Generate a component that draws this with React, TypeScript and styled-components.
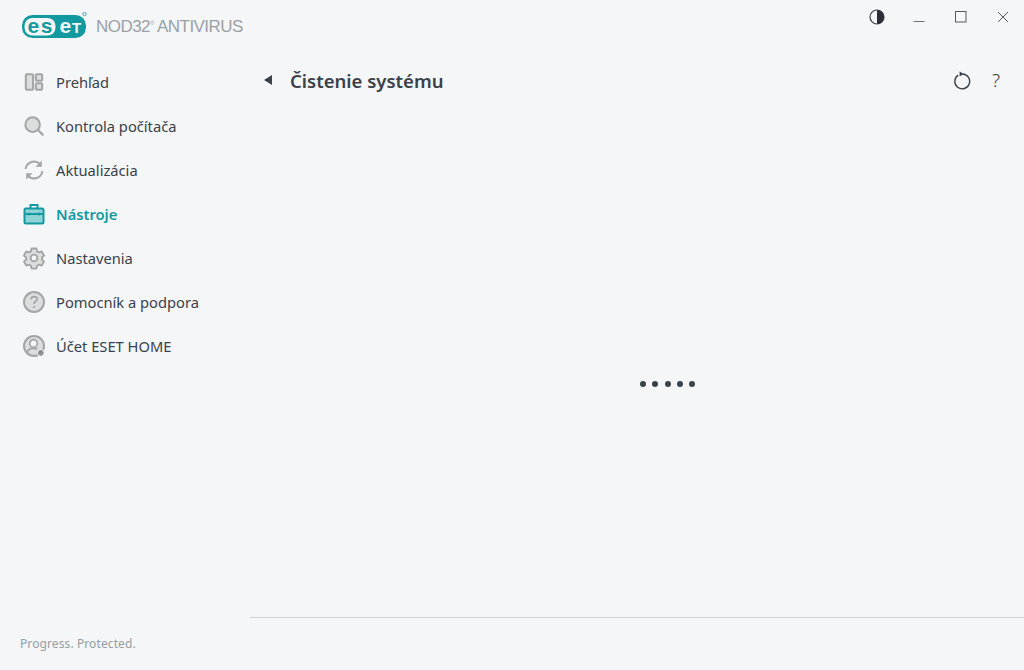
import React from "react";
import styled, { createGlobalStyle } from "styled-components";

const GlobalStyle = createGlobalStyle`
  html, body {
    margin: 0;
    padding: 0;
    background: #f4f6f8;
  }
  * {
    box-sizing: border-box;
  }
`;

const GRAY = "#a3a5a6";
const GRAY_FILL = "#dcdddd";
const TEAL = "#129aa0";
const TEAL_FILL = "#8ed3d6";
const DARK = "#3b4149";
const BG = "#f4f6f8";

const OverviewIcon = () => (
  <svg width="20" height="20" viewBox="0 0 22 22" fill={GRAY_FILL} stroke={GRAY} strokeWidth="2.2">
    <rect x="2" y="2.5" width="8" height="17" rx="1" />
    <rect x="13" y="2.5" width="7" height="7" rx="1" />
    <rect x="13" y="12.5" width="7" height="7" rx="1" />
  </svg>
);

const SearchIcon = () => (
  <svg width="20" height="20" viewBox="0 0 22 22" fill="none" stroke={GRAY} strokeWidth="2.2">
    <circle cx="9.5" cy="9.5" r="8" fill={GRAY_FILL} />
    <path d="M15.5 15.5L20.5 20.5" strokeLinecap="round" strokeWidth="2.4" />
  </svg>
);

const UpdateIcon = () => (
  <svg width="22" height="22" viewBox="0 0 22 22" fill="none" stroke={GRAY} strokeWidth="2">
    <path d="M2.6 10A8.5 8.5 0 0 1 17.2 5.2" />
    <path d="M19.4 12A8.5 8.5 0 0 1 4.8 16.8" />
    <path d="M18.8 1.6V7.8H12.6Z" fill={GRAY} stroke="none" />
    <path d="M3.2 20.4V14.2H9.4Z" fill={GRAY} stroke="none" />
  </svg>
);

const ToolsIcon = () => (
  <svg width="22" height="22" viewBox="0 0 22 22" fill="none" stroke={TEAL} strokeWidth="2">
    <rect x="1.5" y="5.5" width="19" height="15" rx="1.5" fill={TEAL_FILL} />
    <path d="M7.5 5.5V2H14.5V5.5" />
    <path d="M2 11H20" />
    <path d="M6 9.5V12.5M16 9.5V12.5" strokeWidth="1.5" />
  </svg>
);

const SettingsIcon = () => (
  <svg width="24" height="24" viewBox="0 0 24 24" fill="none" stroke={GRAY} strokeWidth="1.9" strokeLinejoin="round">
    <path
      d="M9.6 2.5h4.8l.7 2.9 1.7 1 2.9-.9 2.3 4-2.1 2 0 2.1 2.1 2-2.3 4-2.9-.9-1.7 1-.7 2.9H9.6l-.7-2.9-1.7-1-2.9.9-2.3-4 2.1-2 0-2.1-2.1-2 2.3-4 2.9.9 1.7-1z"
      fill={GRAY_FILL}
    />
    <circle cx="12" cy="12" r="3.4" fill={BG} />
  </svg>
);

const HelpIcon = () => (
  <svg width="24" height="24" viewBox="0 0 24 24" fill="none" stroke={GRAY} strokeWidth="2">
    <circle cx="12" cy="12" r="10" fill={GRAY_FILL} />
    <path d="M8.9 9.4C9 7.6 10.3 6.6 12 6.6C13.8 6.6 15.1 7.7 15.1 9.2C15.1 11.4 12 11.5 12 14" strokeWidth="1.7" />
    <circle cx="12" cy="17" r="1.1" fill={GRAY} stroke="none" />
  </svg>
);

const AccountIcon = () => (
  <svg width="24" height="24" viewBox="0 0 24 24" fill="none" stroke={GRAY} strokeWidth="2">
    <circle cx="12" cy="12" r="10" fill={GRAY_FILL} />
    <circle cx="11.5" cy="9.5" r="3.8" fill={BG} strokeWidth="1.7" />
    <path d="M5 19C5.8 15.8 8 14.4 11.5 14.4C13 14.4 14.2 14.7 15.2 15.2" strokeWidth="1.7" />
    <circle cx="18.8" cy="18.8" r="3.4" fill="#8e9091" stroke={BG} strokeWidth="1" />
  </svg>
);

const navItems = [
  { label: "Prehľad", icon: <OverviewIcon /> },
  { label: "Kontrola počítača", icon: <SearchIcon /> },
  { label: "Aktualizácia", icon: <UpdateIcon /> },
  { label: "Nástroje", icon: <ToolsIcon />, active: true },
  { label: "Nastavenia", icon: <SettingsIcon /> },
  { label: "Pomocník a podpora", icon: <HelpIcon /> },
  { label: "Účet ESET HOME", icon: <AccountIcon /> },
];

const LOGO_FONT = "'Liberation Sans', sans-serif";

const App = () => {
  return (
    <Page>
      <GlobalStyle />
      <Sidebar>
        <Brand>
          <svg width="68" height="30" viewBox="0 0 68 30">
            <rect x="1" y="3" width="64" height="23" rx="10.5" fill={TEAL} />
            <rect x="3.5" y="6" width="31" height="17.5" rx="8" fill={BG} />
            <text x="6.5" y="20.5" fontFamily={LOGO_FONT} fontWeight="700" fontSize="21" letterSpacing="1.5" fill={TEAL}>
              es
            </text>
            <text x="38.5" y="20.5" fontFamily={LOGO_FONT} fontWeight="700" fontSize="21" fill={BG}>
              e
            </text>
            <text x="51" y="20.5" fontFamily={LOGO_FONT} fontWeight="700" fontSize="15" fill={BG}>
              T
            </text>
            <circle cx="63.5" cy="2" r="1.7" fill="none" stroke={TEAL} strokeWidth="0.8" />
          </svg>
          <ProductName>
            NOD32<Reg>®</Reg> ANTIVIRUS
          </ProductName>
        </Brand>
        <Nav>
          {navItems.map((item) => (
            <NavItem key={item.label} $active={item.active}>
              <NavIcon>{item.icon}</NavIcon>
              {item.label}
            </NavItem>
          ))}
        </Nav>
        <Slogan>Progress. Protected.</Slogan>
      </Sidebar>
      <Main>
        <WindowBar>
          <svg width="16" height="16" viewBox="0 0 16 16">
            <circle cx="8" cy="8" r="7" fill="none" stroke={DARK} strokeWidth="1.2" />
            <path d="M8 1A7 7 0 0 1 8 15Z" fill="#2b2f35" />
          </svg>
          <WindowButtons>
            <svg width="12" height="12" viewBox="0 0 12 12">
              <path d="M0.5 10.5H11.5" stroke="#6d7177" strokeWidth="1" />
            </svg>
            <svg width="12" height="12" viewBox="0 0 12 12">
              <rect x="0.5" y="0.5" width="10.5" height="10.5" fill="none" stroke="#55595f" strokeWidth="1" />
            </svg>
            <svg width="12" height="12" viewBox="0 0 12 12">
              <path d="M1 1L11 11M11 1L1 11" stroke="#55595f" strokeWidth="1" />
            </svg>
          </WindowButtons>
        </WindowBar>
        <TitleRow>
          <BackArrow />
          <Title>Čistenie systému</Title>
          <TitleActions>
            <svg width="18" height="20" viewBox="0 0 18 20" fill="none">
              <path d="M5.2 5.2A7.4 7.4 0 1 0 9.4 4" stroke={DARK} strokeWidth="1.4" />
              <path d="M6.6 1.4L10.6 4L6.6 6.4Z" fill={DARK} />
            </svg>
            <HelpMark>?</HelpMark>
          </TitleActions>
        </TitleRow>
        <Content>
          <Dots>
            {[0, 1, 2, 3, 4].map((i) => (
              <Dot key={i} />
            ))}
          </Dots>
        </Content>
        <Footer />
      </Main>
    </Page>
  );
};

export default App;

const Page = styled.div`
  display: grid;
  grid-template-columns: 250px 1fr;
  width: 1024px;
  height: 670px;
  overflow: hidden;
  background: ${BG};
  font-family: "Noto Sans", sans-serif;
`;

const Sidebar = styled.aside`
  display: flex;
  flex-direction: column;
  height: 670px;
`;

const Brand = styled.div`
  display: flex;
  align-items: center;
  gap: 7px;
  height: 60px;
  padding: 0 0 6px 21px;
`;

const ProductName = styled.span`
  font-family: "Liberation Sans", sans-serif;
  font-size: 17px;
  letter-spacing: -0.55px;
  color: #9aa1a6;
  white-space: nowrap;
`;

const Reg = styled.sup`
  font-size: 6px;
  line-height: 0;
`;

const Nav = styled.nav`
  display: flex;
  flex-direction: column;
`;

const NavItem = styled.div<{ $active?: boolean }>`
  display: flex;
  align-items: center;
  gap: 10px;
  height: 44px;
  padding-left: 22px;
  font-size: 14.7px;
  font-weight: ${({ $active }) => ($active ? 600 : 400)};
  color: ${({ $active }) => ($active ? TEAL : DARK)};
`;

const NavIcon = styled.span`
  display: flex;
  align-items: center;
  justify-content: center;
  width: 24px;
  height: 24px;
`;

const Slogan = styled.div`
  margin-top: auto;
  padding: 0 0 18px 20px;
  font-size: 12px;
  letter-spacing: 0.1px;
  color: #979da3;
`;

const Main = styled.main`
  display: flex;
  flex-direction: column;
  height: 670px;
`;

const WindowBar = styled.div`
  display: flex;
  justify-content: flex-end;
  gap: 28px;
  height: 44px;
  padding: 9px 15px 0 0;
`;

const WindowButtons = styled.div`
  display: flex;
  gap: 30px;
  padding-top: 2px;
  height: 14px;
`;

const TitleRow = styled.div`
  display: flex;
  align-items: center;
  height: 44px;
  margin-top: 14px;
  padding: 0 24px 0 14px;
`;

const BackArrow = styled.span`
  width: 0;
  height: 0;
  border-top: 5px solid transparent;
  border-bottom: 5px solid transparent;
  border-right: 8px solid ${DARK};
`;

const Title = styled.h1`
  margin: 0 0 0 18px;
  font-size: 18.5px;
  font-weight: 600;
  color: ${DARK};
`;

const TitleActions = styled.div`
  display: flex;
  align-items: center;
  gap: 21px;
  margin-left: auto;
`;

const HelpMark = styled.span`
  font-size: 19px;
  font-weight: 300;
  color: ${DARK};
`;

const Content = styled.div`
  flex: 1;
  display: flex;
  align-items: center;
  justify-content: center;
  padding: 49px 0 0 61px;
`;

const Dots = styled.div`
  display: flex;
  gap: 6.3px;
`;

const Dot = styled.span`
  width: 6px;
  height: 6px;
  border-radius: 50%;
  background: ${DARK};
`;

const Footer = styled.div`
  height: 53px;
  border-top: 1px solid #cfd2d5;
`;
